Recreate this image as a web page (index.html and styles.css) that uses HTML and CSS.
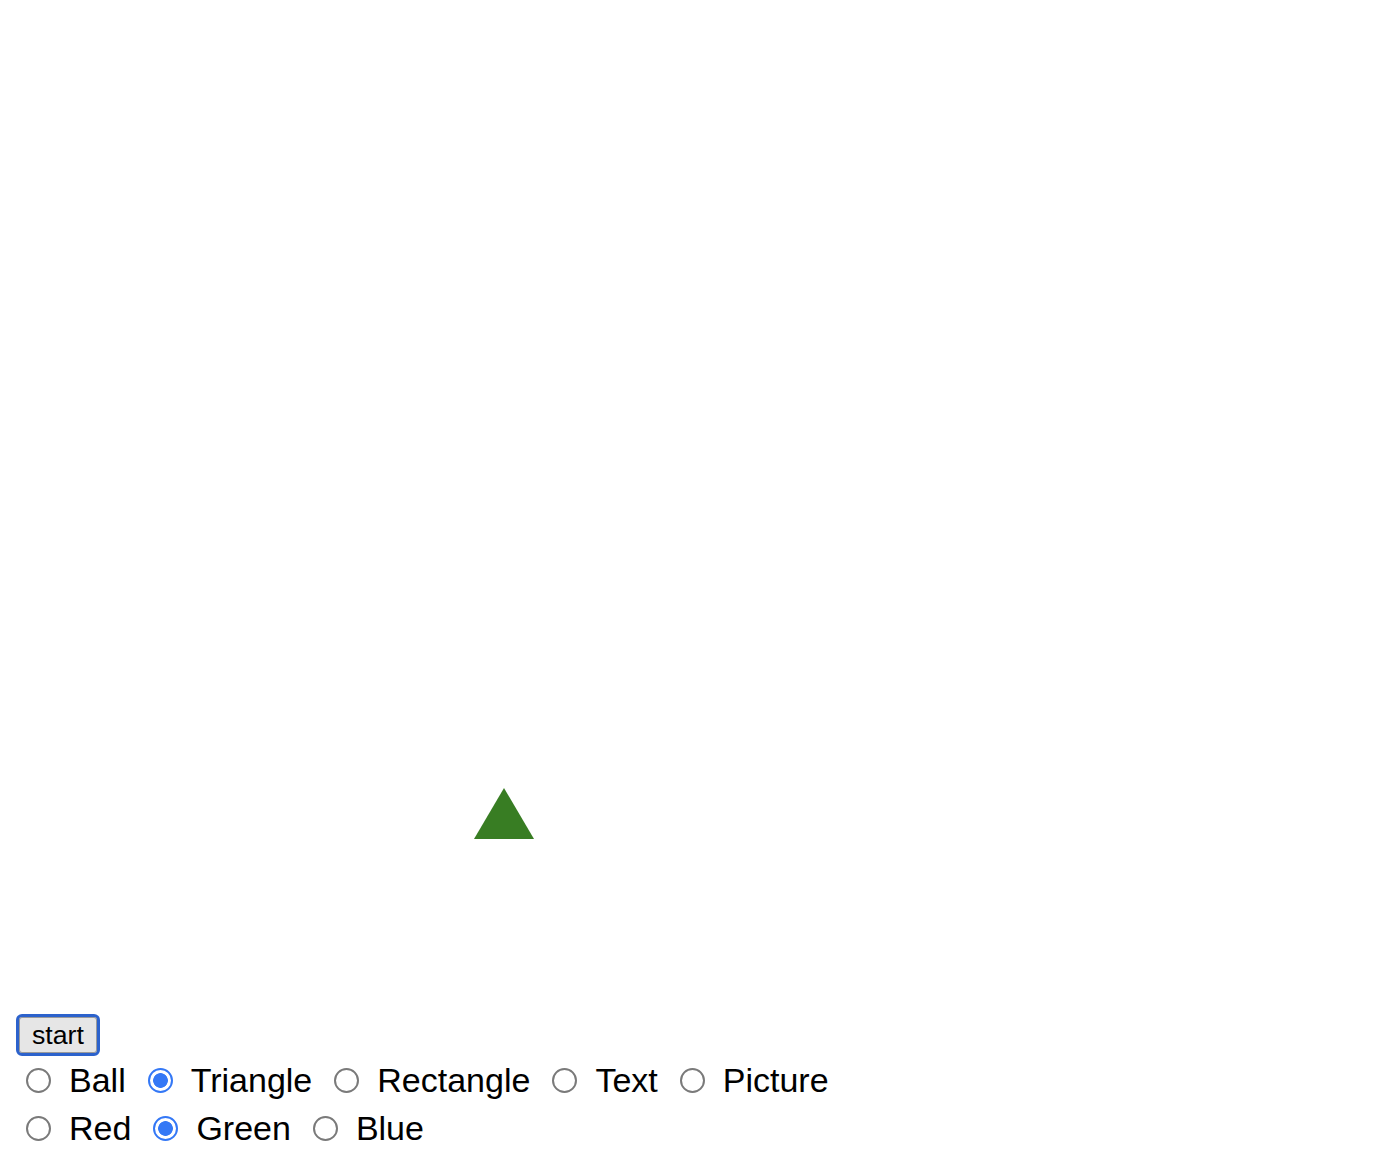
FILE: index.html
```html
<!DOCTYPE html>
<html>
<head>
<meta charset="utf-8">
<link rel="stylesheet" href="styles.css">
</head>
<body>
<div class="stage">
  <svg class="shape" width="62" height="54" viewBox="0 0 62 54">
    <polygon points="31,1 1,52 61,52" fill="#387d23"/>
  </svg>
</div>
<button class="start">start</button>
<div class="row">
  <label class="opt first"><input type="radio" name="shape" class="radio"><span>Ball</span></label>
  <label class="opt"><input type="radio" name="shape" class="radio" checked><span>Triangle</span></label>
  <label class="opt"><input type="radio" name="shape" class="radio"><span>Rectangle</span></label>
  <label class="opt"><input type="radio" name="shape" class="radio"><span>Text</span></label>
  <label class="opt"><input type="radio" name="shape" class="radio"><span>Picture</span></label>
</div>
<div class="row">
  <label class="opt first"><input type="radio" name="color" class="radio"><span>Red</span></label>
  <label class="opt"><input type="radio" name="color" class="radio" checked><span>Green</span></label>
  <label class="opt"><input type="radio" name="color" class="radio"><span>Blue</span></label>
</div>
</body>
</html>
```
FILE: styles.css
```css
html, body {
  background: #ffffff;
}
body {
  margin: 16px;
  font-family: "Liberation Sans", Arial, sans-serif;
  color: #000;
}
.stage {
  position: relative;
  height: 998px;
}
.shape {
  position: absolute;
  left: 457px;
  top: 771px;
}
.start {
  display: block;
  box-sizing: border-box;
  height: 42px;
  margin: 0;
  padding: 0 13px;
  font-family: "Liberation Sans", Arial, sans-serif;
  font-size: 26.67px;
  color: #000;
  background: #e6e6e6;
  border: 3px solid #2c62cc;
  border-radius: 6px;
  box-shadow: inset 0 0 0 1px #9a9a9a;
  line-height: 1;
}
.row {
  display: flex;
  align-items: center;
  height: 48px;
}
.opt {
  display: flex;
  align-items: center;
  font-size: 34px;
  line-height: 48px;
}
.radio {
  appearance: none;
  -webkit-appearance: none;
  box-sizing: border-box;
  width: 25px;
  height: 25px;
  margin: 0 18px 0 22px;
  border: 2px solid #7a7a7a;
  border-radius: 50%;
  background: #fff;
  position: relative;
}
.first .radio {
  margin-left: 10px;
}
.radio:checked {
  border-color: #3478f6;
  background: radial-gradient(circle, #3478f6 0 7px, #fff 7.7px);
}
```
